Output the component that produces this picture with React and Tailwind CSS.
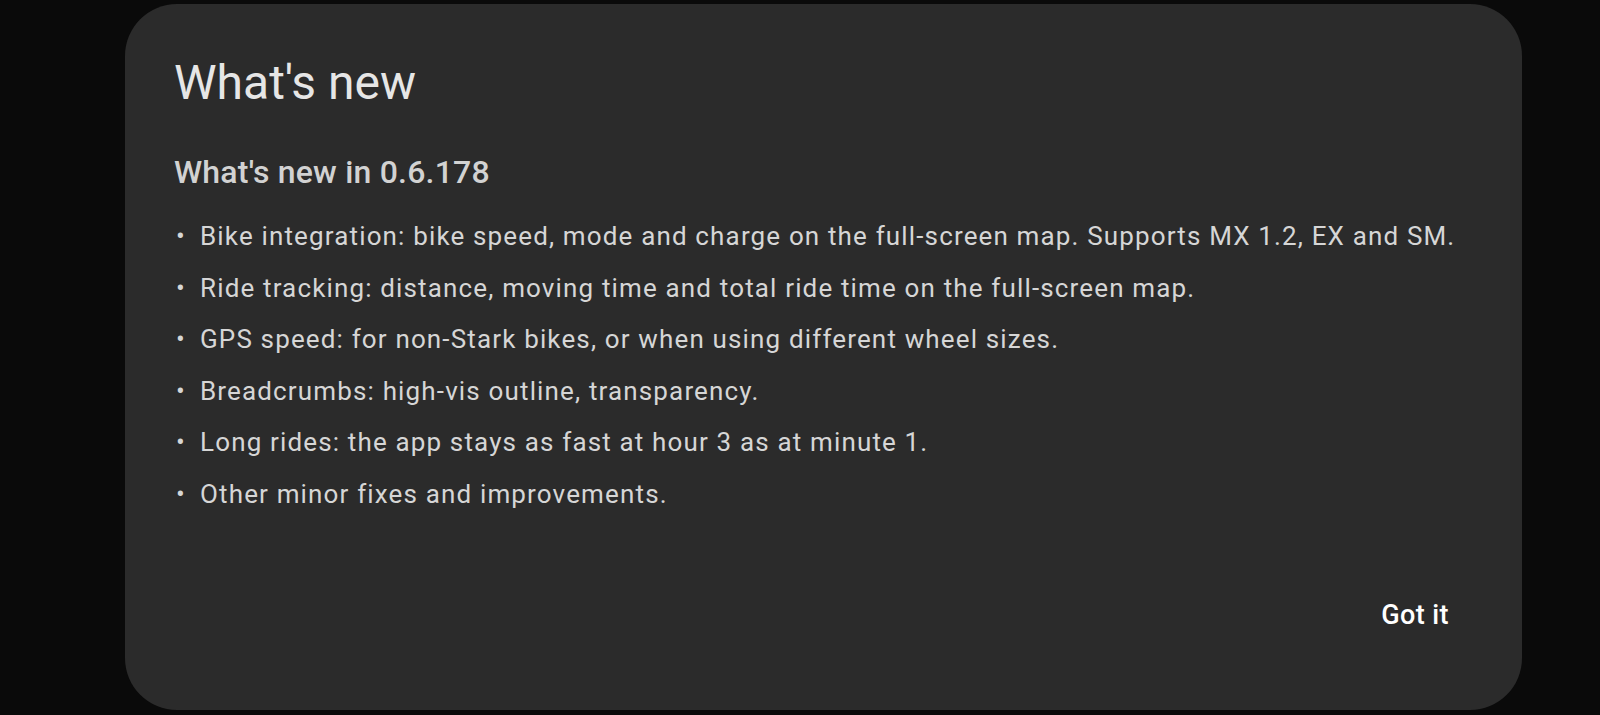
export default function App() {
  const items = [
    "Bike integration: bike speed, mode and charge on the full-screen map. Supports MX 1.2, EX and SM.",
    "Ride tracking: distance, moving time and total ride time on the full-screen map.",
    "GPS speed: for non-Stark bikes, or when using different wheel sizes.",
    "Breadcrumbs: high-vis outline, transparency.",
    "Long rides: the app stays as fast at hour 3 as at minute 1.",
    "Other minor fixes and improvements.",
  ];
  return (
    <div
      className="w-[1600px] h-[715px] bg-[#0a0a0a] overflow-hidden pt-[4px] pl-[125px]"
      style={{ fontFamily: "Roboto, 'Noto Sans', sans-serif" }}
    >
      <div className="w-[1397px] h-[706px] bg-[#2b2b2b] rounded-[52px] flex flex-col pl-[49px] pr-[73px] pt-[51px] pb-[75px]">
        <h1 className="text-[48px] leading-[56px] font-normal text-[#e6e6e6]">What's new</h1>
        <h2 className="mt-[41px] text-[32px] leading-[40px] font-medium tracking-[0.2px] text-[#d2d2d2]">What's new in 0.6.178</h2>
        <ul className="mt-[19px] -mr-[40px] flex flex-col">
          {items.map((t) => (
            <li key={t} className="flex whitespace-nowrap text-[26px] leading-[51.6px] tracking-[1.15px] text-[#d6d6d6]">
              <span className="w-[26px] shrink-0 pl-[2px]">•</span>
              <span>{t}</span>
            </li>
          ))}
        </ul>
        <div className="mt-auto flex justify-end">
          <button className="text-[27px] leading-[40px] font-medium tracking-[0.4px] text-white">Got it</button>
        </div>
      </div>
    </div>
  );
}
